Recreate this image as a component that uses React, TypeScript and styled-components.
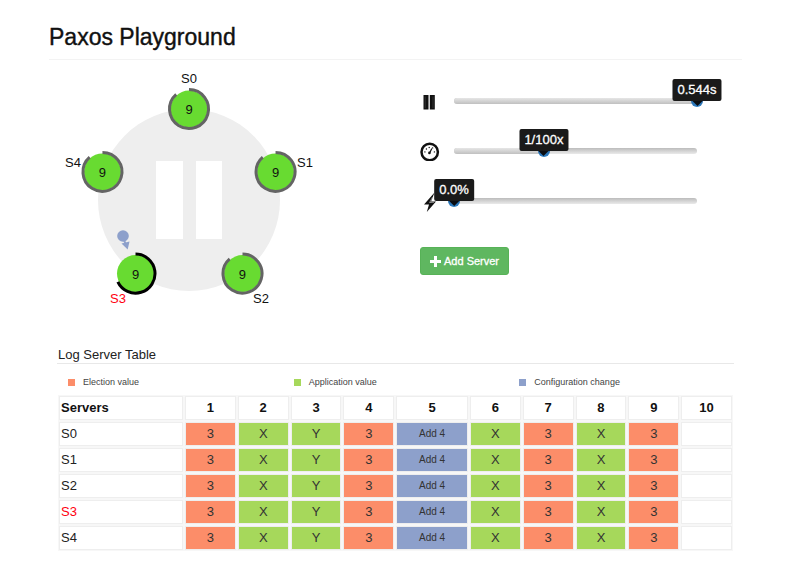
import React, { useState } from "react";
import styled, { createGlobalStyle } from "styled-components";

const GlobalStyle = createGlobalStyle`
  *, *::before, *::after { box-sizing: border-box; }
  body {
    margin: 0;
    background: #fff;
    color: #111;
    font-family: "Liberation Sans", Arial, sans-serif;
    font-size: 13px;
  }
`;

const COLORS = { election: "#fc8d69", application: "#a6d85b", config: "#8da0cb" };
type Kind = keyof typeof COLORS;

const Page = styled.div`
  padding: 25px 58px 12px 49px;
`;

const Title = styled.h1`
  margin: 0;
  padding-bottom: 10px;
  border-bottom: 1px solid #f3f3f3;
  font-size: 23px;
  font-weight: 400;
  line-height: 24px;
  -webkit-text-stroke: 0.4px currentColor;
`;

const Main = styled.main`
  display: grid;
  grid-template-columns: minmax(0, 371fr) minmax(0, 322fr);
`;

const Diagram = styled.svg`
  display: block;
  width: 100%;
  font-size: 13px;
`;

const Controls = styled.div`
  padding: 16px 45px 0 0;
`;

const ControlRow = styled.div`
  display: grid;
  grid-template-columns: 20px minmax(0, 1fr);
  column-gap: 14px;
  align-items: center;
  height: 50px;
`;

const IconButton = styled.button`
  display: flex;
  align-items: center;
  width: 20px;
  height: 20px;
  padding: 0;
  border: 0;
  background: none;
  cursor: pointer;
`;

const IconSlot = styled.span`
  display: flex;
`;

const Track = styled.div`
  position: relative;
  height: 6px;
  border-radius: 3px;
  background: linear-gradient(#bcbcbc, #eaeaea);
`;

const Selection = styled.div`
  height: 6px;
  border-radius: 3px 0 0 3px;
  background: linear-gradient(#e6e6e6, #c0c0c0);
`;

const Range = styled.input`
  position: absolute;
  inset: -3px -6px;
  width: calc(100% + 12px);
  height: 12px;
  margin: 0;
  appearance: none;
  background: transparent;
  cursor: pointer;

  &::-webkit-slider-thumb {
    appearance: none;
    width: 12px;
    height: 12px;
    border-radius: 50%;
    background: linear-gradient(#22609a, #2f7fc4);
  }
`;

const Tooltip = styled.output`
  position: absolute;
  bottom: 3px;
  transform: translateX(-50%);
  padding: 0 5px;
  border-radius: 2px;
  background: #1a1a1a;
  color: #fff;
  font-size: 13px;
  line-height: 22px;
  white-space: nowrap;
  pointer-events: none;
  -webkit-text-stroke: 0.3px currentColor;

  &::after {
    content: "";
    position: absolute;
    top: 100%;
    left: 50%;
    margin-left: -5px;
    border: 5px solid transparent;
    border-top-color: #0a0d12;
    border-bottom: 0;
  }
`;

const AddButton = styled.button`
  display: inline-flex;
  align-items: center;
  gap: 3px;
  height: 28px;
  margin-top: 21px;
  padding: 0 9px;
  border: 1px solid #57b257;
  border-radius: 3px;
  background: #5fb760;
  color: #fff;
  font: 11px "Liberation Sans", Arial, sans-serif;
  white-space: nowrap;
  cursor: pointer;
  -webkit-text-stroke: 0.3px currentColor;
`;

const LogSection = styled.section`
  margin: 26px 8px 0;
`;

const LogTitle = styled.h2`
  margin: 0;
  padding-left: 1px;
  border-bottom: 1px solid #e8e8e8;
  font-size: 13px;
  font-weight: 400;
  line-height: 17px;
  color: #222;
`;

const Legend = styled.ul`
  display: grid;
  grid-template-columns: repeat(3, minmax(0, 1fr));
  margin: 0;
  padding: 12px 0 6px;
  list-style: none;
  font-size: 9px;
  line-height: 12px;
  color: #444;
`;

const LegendItem = styled.li`
  display: flex;
  align-items: center;
  gap: 8px;
  padding-left: 11px;
`;

const Swatch = styled.span<{ $kind: Kind }>`
  width: 7px;
  height: 7px;
  background: ${(p) => COLORS[p.$kind]};
`;

const LogTable = styled.table`
  width: 100%;
  table-layout: fixed;
  border-collapse: separate;
  border-spacing: 2px;
`;

const Col = styled.col<{ $width?: string }>`
  width: ${(p) => p.$width ?? "auto"};
`;

const HeadCell = styled.th<{ $name?: boolean }>`
  height: 24px;
  padding: 0 1px;
  border: 1px solid #eee;
  outline: 1px solid #f7f7f7;
  background: #fff;
  font-size: 13px;
  line-height: 22px;
  text-align: ${(p) => (p.$name ? "left" : "center")};
`;

const ServerCell = styled.th<{ $leader: boolean }>`
  height: 24px;
  padding: 0 1px;
  border: 1px solid #eee;
  outline: 1px solid #f7f7f7;
  font-size: 13px;
  font-weight: 400;
  line-height: 22px;
  text-align: left;
  color: ${(p) => (p.$leader ? "#ff0010" : "#222")};
`;

const ValueCell = styled.td<{ $kind?: Kind }>`
  height: 24px;
  padding: 0;
  border: 1px solid #eee;
  outline: 1px solid #f7f7f7;
  background: ${(p) => (p.$kind ? COLORS[p.$kind] : "#fff")};
  background-clip: padding-box;
  font-size: ${(p) => (p.$kind === "config" ? "10px" : "13px")};
  line-height: 22px;
  text-align: center;
  color: #333;
`;

const CENTER = { x: 140, y: 140 };
const RADIUS = 91;

const servers = [
  { name: "S0", progress: 319, labelX: 140, labelY: 23, leader: false },
  { name: "S1", progress: 319, labelX: 256, labelY: 107, leader: false },
  { name: "S2", progress: 319, labelX: 212, labelY: 243, leader: false },
  { name: "S3", progress: 245, labelX: 69, labelY: 243, leader: true },
  { name: "S4", progress: 319, labelX: 24, labelY: 107, leader: false },
];

const entries: { value: string; kind?: Kind }[] = [
  { value: "3", kind: "election" },
  { value: "X", kind: "application" },
  { value: "Y", kind: "application" },
  { value: "3", kind: "election" },
  { value: "Add 4", kind: "config" },
  { value: "X", kind: "application" },
  { value: "3", kind: "election" },
  { value: "X", kind: "application" },
  { value: "3", kind: "election" },
  { value: "" },
];

const legend: { kind: Kind; label: string }[] = [
  { kind: "election", label: "Election value" },
  { kind: "application", label: "Application value" },
  { kind: "config", label: "Configuration change" },
];

function polar(cx: number, cy: number, r: number, degrees: number) {
  const a = (degrees * Math.PI) / 180;
  return { x: cx + r * Math.sin(a), y: cy - r * Math.cos(a) };
}

function ServerNode({ index }: { index: number }) {
  const s = servers[index];
  const c = polar(CENTER.x, CENTER.y, RADIUS, index * 72);
  const end = polar(c.x, c.y, 19.5, s.progress);
  return (
    <g>
      <circle cx={c.x} cy={c.y} r={18.5} fill="#68db31" />
      <path
        d={`M${c.x} ${c.y - 19.5}A19.5 19.5 0 1 1 ${end.x} ${end.y}`}
        fill="none"
        stroke={s.leader ? "#000" : "#646464"}
        strokeWidth={3}
      />
      <text x={c.x} y={c.y + 5} textAnchor="middle" fill="#111">9</text>
      <text x={s.labelX} y={s.labelY} textAnchor="middle" fill={s.leader ? "#ff0010" : "#111"}>
        {s.name}
      </text>
    </g>
  );
}

function PauseIcon() {
  return (
    <svg width="18" height="20" viewBox="0 0 18 20" aria-hidden="true">
      <path d="M3.5 4h5v14.5h-5zM9.8 4h5v14.5h-5z" fill="#111" />
      <path d="M5.2 5.5V17M13 5.5V17" stroke="#3a3a3a" strokeWidth="0.8" />
    </svg>
  );
}

function GaugeIcon() {
  return (
    <svg width="20" height="20" viewBox="0 0 20 20" aria-hidden="true">
      <circle cx="9.7" cy="11" r="8.2" fill="#fff" stroke="#111" strokeWidth="2.5" />
      <path d="M9.6 11.9L11.6 8" stroke="#111" strokeWidth="1.2" strokeLinecap="round" />
      <circle cx="9.4" cy="11.9" r="1.3" fill="#111" />
      <g fill="#111">
        <circle cx="4.9" cy="10.9" r="0.7" />
        <circle cx="6.4" cy="8" r="0.7" />
        <circle cx="9.2" cy="6.5" r="0.7" />
        <circle cx="14.4" cy="10.9" r="0.7" />
        <circle cx="12.6" cy="6.9" r="0.7" />
      </g>
    </svg>
  );
}

function BoltIcon() {
  return (
    <svg width="20" height="22" viewBox="0 0 20 22" aria-hidden="true">
      <path d="M14.5 2.5L4 14.5h5L6.8 22 16 11.5h-5z" fill="#111" />
      <path d="M12.6 7L9.6 12.6l4.4-.4" fill="none" stroke="#aaa" strokeWidth="0.8" />
    </svg>
  );
}

interface SliderProps {
  label: string;
  initial: number;
  format: (value: number) => string;
}

function Slider({ label, initial, format }: SliderProps) {
  const [value, setValue] = useState(initial);
  return (
    <Track>
      <Selection style={{ width: `${value}%` }} />
      <Range
        type="range"
        min={0}
        max={100}
        aria-label={label}
        value={value}
        onChange={(e) => setValue(Number(e.target.value))}
      />
      <Tooltip style={{ left: `${value}%` }}>{format(value)}</Tooltip>
    </Track>
  );
}

export default function App() {
  return (
    <Page>
      <GlobalStyle />
      <Title>Paxos Playground</Title>
      <Main>
        <Diagram viewBox="0 0 371 260" role="img" aria-label="Server cluster, paused">
          <circle cx={CENTER.x} cy={CENTER.y} r={RADIUS} fill="#eee" />
          <path d="M107 101h27v78h-27zM147 101h26v78h-26z" fill="#fff" />
          {servers.map((s, i) => (
            <ServerNode key={s.name} index={i} />
          ))}
          <circle cx="74" cy="176" r="5.8" fill={COLORS.config} />
          <path d="M75 180l2 5" stroke={COLORS.config} strokeWidth="2" />
          <path d="M72.5 183.5l8-2-1.8 8z" fill={COLORS.config} />
        </Diagram>
        <Controls>
          <ControlRow>
            <IconButton type="button" aria-label="Pause">
              <PauseIcon />
            </IconButton>
            <Slider label="Time" initial={100} format={(v) => `${(v * 0.00544).toFixed(3)}s`} />
          </ControlRow>
          <ControlRow>
            <IconSlot>
              <GaugeIcon />
            </IconSlot>
            <Slider
              label="Speed"
              initial={37}
              format={(v) => `1/${Math.round(Math.pow(10, 2 + (37 - v) / 30))}x`}
            />
          </ControlRow>
          <ControlRow>
            <IconSlot>
              <BoltIcon />
            </IconSlot>
            <Slider label="Failure rate" initial={0} format={(v) => `${v.toFixed(1)}%`} />
          </ControlRow>
          <AddButton type="button">
            <svg width="11" height="11" viewBox="0 0 11 11" aria-hidden="true">
              <path d="M4 0h3v4h4v3H7v4H4V7H0V4h4z" fill="#fff" />
            </svg>
            Add Server
          </AddButton>
        </Controls>
      </Main>
      <LogSection>
        <LogTitle>Log Server Table</LogTitle>
        <Legend>
          {legend.map((item) => (
            <LegendItem key={item.kind}>
              <Swatch $kind={item.kind} />
              {item.label}
            </LegendItem>
          ))}
        </Legend>
        <LogTable>
          <colgroup>
            <Col $width="19%" />
            {entries.map((e, i) => (
              <Col key={i} $width={e.kind === "config" ? "11%" : undefined} />
            ))}
          </colgroup>
          <thead>
            <tr>
              <HeadCell scope="col" $name>Servers</HeadCell>
              {entries.map((_, i) => (
                <HeadCell key={i} scope="col">{i + 1}</HeadCell>
              ))}
            </tr>
          </thead>
          <tbody>
            {servers.map((s) => (
              <tr key={s.name}>
                <ServerCell scope="row" $leader={s.leader}>{s.name}</ServerCell>
                {entries.map((e, i) => (
                  <ValueCell key={i} $kind={e.kind}>{e.value}</ValueCell>
                ))}
              </tr>
            ))}
          </tbody>
        </LogTable>
      </LogSection>
    </Page>
  );
}
